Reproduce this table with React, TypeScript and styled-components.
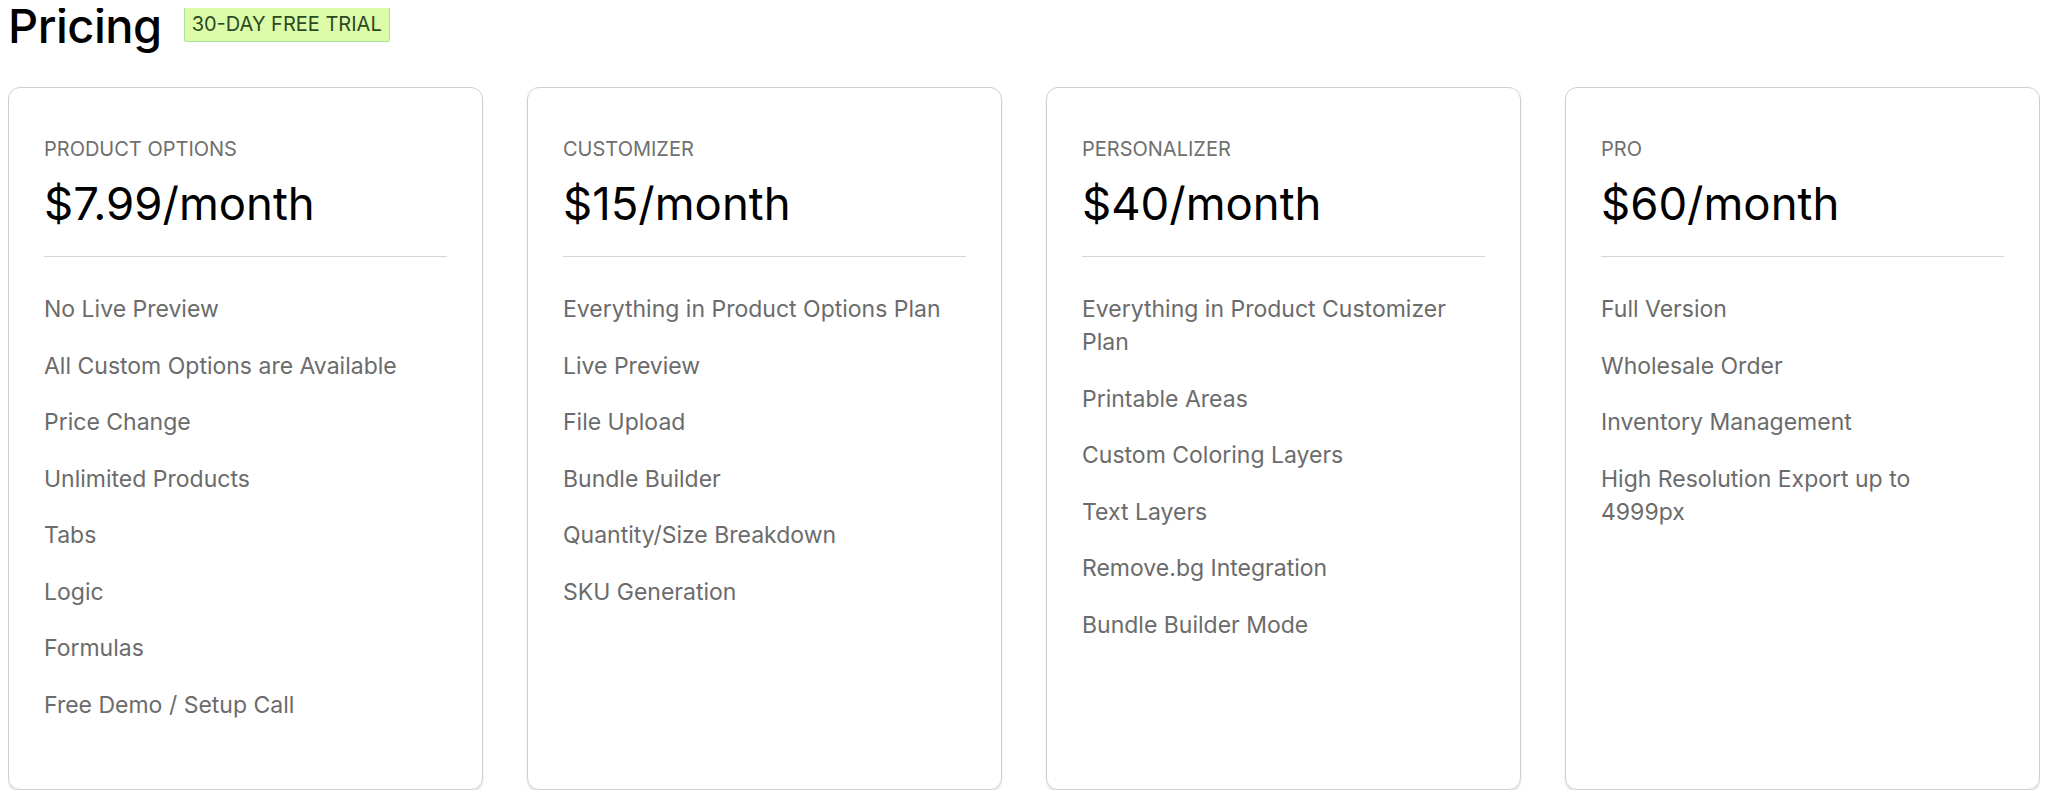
import React from "react";
import styled, { createGlobalStyle } from "styled-components";

interface Plan {
  name: string;
  price: string;
  features: string[];
}

const plans: Plan[] = [
  {
    name: "Product Options",
    price: "$7.99/month",
    features: [
      "No Live Preview",
      "All Custom Options are Available",
      "Price Change",
      "Unlimited Products",
      "Tabs",
      "Logic",
      "Formulas",
      "Free Demo / Setup Call",
    ],
  },
  {
    name: "Customizer",
    price: "$15/month",
    features: [
      "Everything in Product Options Plan",
      "Live Preview",
      "File Upload",
      "Bundle Builder",
      "Quantity/Size Breakdown",
      "SKU Generation",
    ],
  },
  {
    name: "Personalizer",
    price: "$40/month",
    features: [
      "Everything in Product Customizer Plan",
      "Printable Areas",
      "Custom Coloring Layers",
      "Text Layers",
      "Remove.bg Integration",
      "Bundle Builder Mode",
    ],
  },
  {
    name: "Pro",
    price: "$60/month",
    features: [
      "Full Version",
      "Wholesale Order",
      "Inventory Management",
      "High Resolution Export up to 4999px",
    ],
  },
];

const GlobalStyle = createGlobalStyle`
  body {
    margin: 8px;
    background: #fff;
    font-family: Inter, "Noto Sans", sans-serif;
    color: #000;
  }
`;

const Header = styled.div`
  display: flex;
  align-items: center;
  gap: 22px;
  height: 50px;
  margin-top: -8px;
`;

const Title = styled.h1`
  margin: 0;
  font-size: 47px;
  font-weight: 500;
  letter-spacing: -0.5px;
  line-height: 1;
`;

const Badge = styled.span`
  display: inline-flex;
  align-items: center;
  height: 33px;
  padding: 0 7px;
  background: #dcfcaa;
  border: 1px solid #a8e39c;
  border-radius: 2px;
  color: #2c4a22;
  font-size: 20px;
  margin-top: -2px;
`;

const Grid = styled.div`
  display: grid;
  grid-template-columns: repeat(4, 1fr);
  gap: 44px;
  margin-top: 37px;
`;

const Card = styled.div`
  height: 703px;
  box-sizing: border-box;
  border: 1px solid #cfcfcf;
  border-radius: 12px;
  box-shadow: 0 2px 2px rgba(0, 0, 0, 0.12);
  padding: 46px 35px 0 35px;
`;

const Label = styled.div`
  font-size: 20px;
  color: #6f6f6f;
  text-transform: uppercase;
  line-height: 30px;
`;

const Price = styled.div`
  font-size: 45.5px;
  color: #000;
  line-height: 56px;
  margin-top: 12px;
  padding-bottom: 24px;
  border-bottom: 1px solid #d6d6d6;
`;

const Features = styled.ul`
  list-style: none;
  margin: 0;
  padding: 36px 8px 0 0;
  display: flex;
  flex-direction: column;
  gap: 23.5px;
`;

const Feature = styled.li`
  font-size: 23px;
  color: #6b6b6b;
  line-height: 33px;
`;

const App: React.FC = () => {
  return (
    <>
      <GlobalStyle />
      <Header>
        <Title>Pricing</Title>
        <Badge>30-DAY FREE TRIAL</Badge>
      </Header>
      <Grid>
        {plans.map((plan) => (
          <Card key={plan.name}>
            <Label>{plan.name}</Label>
            <Price>{plan.price}</Price>
            <Features>
              {plan.features.map((f) => (
                <Feature key={f}>{f}</Feature>
              ))}
            </Features>
          </Card>
        ))}
      </Grid>
    </>
  );
};

export default App;
